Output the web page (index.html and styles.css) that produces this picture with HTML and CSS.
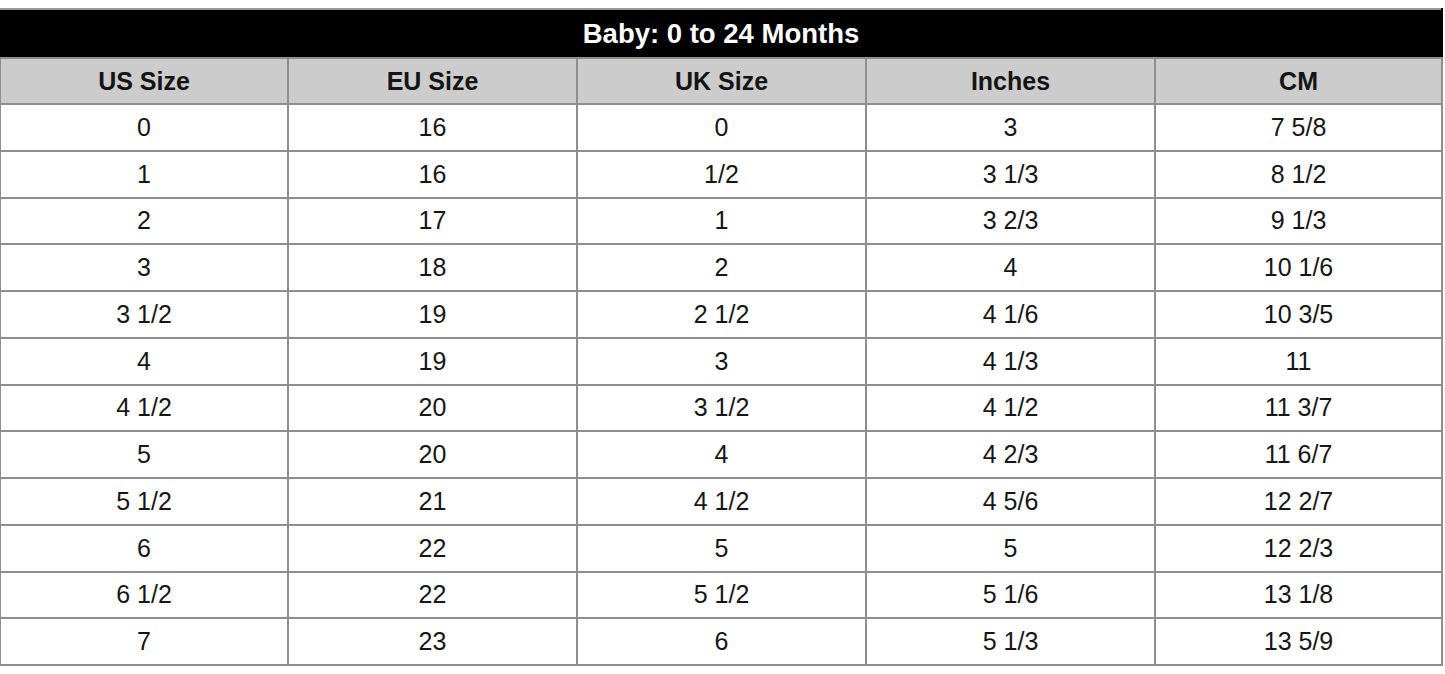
FILE: index.html
```html
<!DOCTYPE html>
<html>
<head>
<meta charset="utf-8">
<link rel="stylesheet" href="styles.css">
</head>
<body>
<table class="chart">
  <colgroup>
    <col class="c1"><col class="c2"><col class="c3"><col class="c4"><col class="c5">
  </colgroup>
  <thead>
    <tr><th class="title" colspan="5">Baby: 0 to 24 Months</th></tr>
    <tr class="heads"><th>US Size</th><th>EU Size</th><th>UK Size</th><th>Inches</th><th>CM</th></tr>
  </thead>
  <tbody>
    <tr><td>0</td><td>16</td><td>0</td><td>3</td><td>7 5/8</td></tr>
    <tr><td>1</td><td>16</td><td>1/2</td><td>3 1/3</td><td>8 1/2</td></tr>
    <tr><td>2</td><td>17</td><td>1</td><td>3 2/3</td><td>9 1/3</td></tr>
    <tr><td>3</td><td>18</td><td>2</td><td>4</td><td>10 1/6</td></tr>
    <tr><td>3 1/2</td><td>19</td><td>2 1/2</td><td>4 1/6</td><td>10 3/5</td></tr>
    <tr><td>4</td><td>19</td><td>3</td><td>4 1/3</td><td>11</td></tr>
    <tr><td>4 1/2</td><td>20</td><td>3 1/2</td><td>4 1/2</td><td>11 3/7</td></tr>
    <tr><td>5</td><td>20</td><td>4</td><td>4 2/3</td><td>11 6/7</td></tr>
    <tr><td>5 1/2</td><td>21</td><td>4 1/2</td><td>4 5/6</td><td>12 2/7</td></tr>
    <tr><td>6</td><td>22</td><td>5</td><td>5</td><td>12 2/3</td></tr>
    <tr><td>6 1/2</td><td>22</td><td>5 1/2</td><td>5 1/6</td><td>13 1/8</td></tr>
    <tr><td>7</td><td>23</td><td>6</td><td>5 1/3</td><td>13 5/9</td></tr>
  </tbody>
</table>
</body>
</html>
```
FILE: styles.css
```css
html, body {
  margin: 0;
  padding: 0;
  background: #ffffff;
}
body {
  padding-top: 8px;
  font-family: "Liberation Sans", Arial, sans-serif;
  color: #111111;
}
.chart {
  width: 1444px;
  border-collapse: collapse;
  table-layout: fixed;
  margin-left: -1px;
}
.c1 { width: 288px; }
.c2, .c3, .c4 { width: 289px; }
.c5 { width: 287px; }
.chart th, .chart td {
  border: 2px solid #8e8e8e;
  text-align: center;
  padding: 0;
  box-sizing: border-box;
}
.chart .title {
  background: #000000;
  color: #ffffff;
  font-weight: bold;
  font-size: 27.5px;
  height: 49px;
  border-color: #9a9a9a #000 #8e8e8e #000;
}
.heads th {
  background: #cccccc;
  font-weight: bold;
  font-size: 25px;
  height: 46px;
  color: #141414;
}
.chart td {
  height: 46.75px;
  font-size: 25px;
  color: #161616;
}
```
